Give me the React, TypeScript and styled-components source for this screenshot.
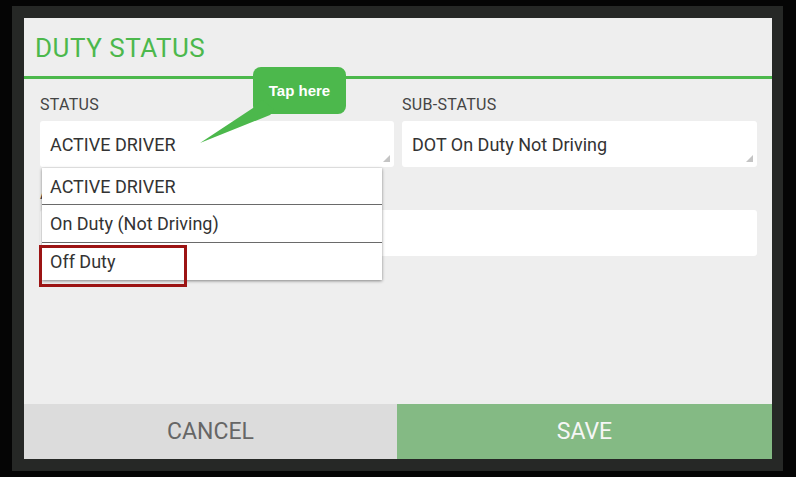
import styled, { createGlobalStyle } from "styled-components";

const GlobalStyle = createGlobalStyle`
  body {
    margin: 0;
    background: #050505;
    font-family: Roboto, "Liberation Sans", sans-serif;
  }
`;

const Frame = styled.div`
  margin: 6px 0 0 12px;
  width: 771px;
  height: 465px;
  box-sizing: border-box;
  padding: 12px 11px 12px 12px;
  background: #262826;
`;

const Panel = styled.div`
  position: relative;
  height: 100%;
  display: flex;
  flex-direction: column;
  background: #eeeeee;
`;

const Header = styled.div`
  height: 58px;
  display: flex;
  align-items: center;
  padding-left: 11px;
  border-bottom: 3px solid #4cb84c;
`;

const Title = styled.h1`
  margin: 2px 0 0;
  font-size: 26px;
  font-weight: 400;
  letter-spacing: 0.5px;
  color: #4cb84c;
`;

const Body = styled.div`
  flex: 1;
  display: flex;
  flex-direction: column;
  gap: 17px;
  padding: 16px 15px 0 16px;
`;

const Row = styled.div`
  display: grid;
  grid-template-columns: 354px 355px;
  gap: 8px;
`;

const Field = styled.div<{ $wide?: boolean }>`
  position: relative;
  display: flex;
  flex-direction: column;
  gap: 7px;
  grid-column: ${(p) => (p.$wide ? "1 / -1" : "auto")};
`;

const Label = styled.label`
  font-size: 16px;
  line-height: 19px;
  color: #444;
  letter-spacing: 0.3px;
`;

const Box = styled.div<{ $select?: boolean }>`
  position: relative;
  height: 46px;
  display: flex;
  align-items: center;
  padding-left: 10px;
  background: #fff;
  border-radius: 3px;
  font-size: 18px;
  color: #333;

  &::after {
    content: "";
    display: ${(p) => (p.$select ? "block" : "none")};
    position: absolute;
    right: 4px;
    bottom: 5px;
    border-left: 7px solid transparent;
    border-bottom: 7px solid #c4c4c4;
  }
`;

const Menu = styled.ul`
  position: absolute;
  top: 73px;
  left: 2px;
  width: 340px;
  margin: 0;
  padding: 0;
  list-style: none;
  background: #fff;
  box-shadow: 0 1px 3px rgba(0, 0, 0, 0.45);
  z-index: 2;
`;

const Option = styled.li`
  position: relative;
  height: 37px;
  display: flex;
  align-items: center;
  padding-left: 8px;
  font-size: 18px;
  color: #333;
  border-bottom: 1px solid #6a6a6a;

  &:first-child {
    height: 36px;
  }

  &:last-child {
    border-bottom: none;
  }
`;

const Highlight = styled.span`
  position: absolute;
  left: -3px;
  top: 2px;
  width: 148px;
  height: 42px;
  box-sizing: border-box;
  border: 3px solid #9c1414;
`;

const Buttons = styled.div`
  display: grid;
  grid-template-columns: 373px 1fr;
  height: 55px;
`;

const Button = styled.button<{ $primary?: boolean }>`
  border: none;
  margin: 0;
  font-family: Roboto, "Liberation Sans", sans-serif;
  font-size: 23px;
  background: ${(p) => (p.$primary ? "#84ba84" : "#dcdcdc")};
  color: ${(p) => (p.$primary ? "#f6f6f6" : "#666")};
`;

const Callout = styled.div`
  position: absolute;
  left: 229px;
  top: 49px;
  width: 93px;
  height: 47px;
  display: flex;
  align-items: center;
  justify-content: center;
  background: #4cb84c;
  border-radius: 8px;
  font-family: "Liberation Sans", Arial, sans-serif;
  font-weight: 700;
  font-size: 15px;
  color: #fff;
  z-index: 3;
`;

const Tail = styled.svg`
  position: absolute;
  left: -55px;
  top: 30px;
  overflow: visible;
`;

const options = ["ACTIVE DRIVER", "On Duty (Not Driving)", "Off Duty"];

export default function App() {
  return (
    <>
      <GlobalStyle />
      <Frame>
        <Panel>
          <Header>
            <Title>DUTY STATUS</Title>
          </Header>
          <Body>
            <Row>
              <Field>
                <Label>STATUS</Label>
                <Box $select>ACTIVE DRIVER</Box>
                <Menu>
                  {options.map((o, i) => (
                    <Option key={o}>
                      {o}
                      {i === 2 && <Highlight />}
                    </Option>
                  ))}
                </Menu>
              </Field>
              <Field>
                <Label>SUB-STATUS</Label>
                <Box $select>DOT On Duty Not Driving</Box>
              </Field>
            </Row>
            <Row>
              <Field $wide>
                <Label>ANNOTATION</Label>
                <Box />
              </Field>
            </Row>
          </Body>
          <Buttons>
            <Button>CANCEL</Button>
            <Button $primary>SAVE</Button>
          </Buttons>
          <Callout>
            <Tail width="80" height="50" viewBox="0 0 80 50">
              <polygon points="2,46 55,11 64,3 77,13 72,18" fill="#4cb84c" />
            </Tail>
            Tap here
          </Callout>
        </Panel>
      </Frame>
    </>
  );
}
